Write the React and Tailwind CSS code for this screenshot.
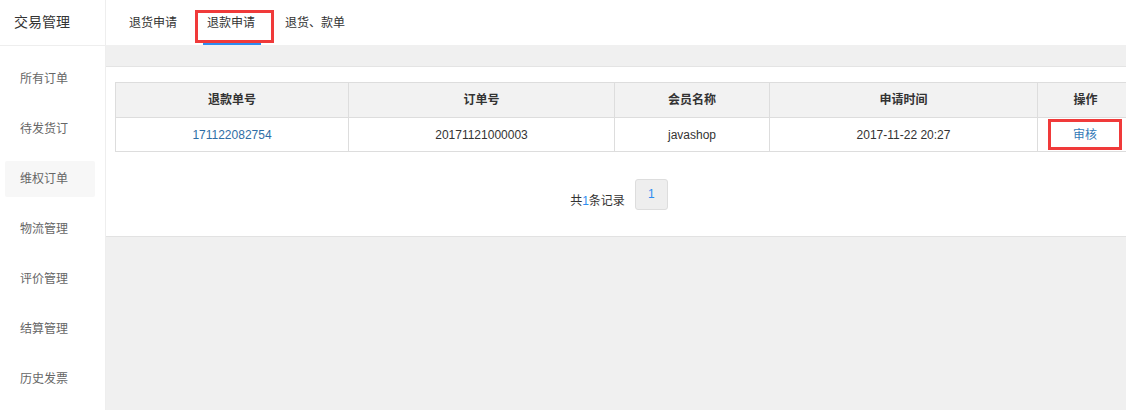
const menu = ["所有订单", "待发货订", "维权订单", "物流管理", "评价管理", "结算管理", "历史发票"];
const tabs = ["退货申请", "退款申请", "退货、款单"];

const cols = [
  { title: "退款单号", w: "w-[233px]" },
  { title: "订单号", w: "w-[266px]" },
  { title: "会员名称", w: "w-[155px]" },
  { title: "申请时间", w: "w-[268px]" },
  { title: "操作", w: "w-[96px]" },
];

const App = () => {
  return (
    <div className="flex h-[410px] w-[1126px] overflow-hidden bg-white font-['Liberation_Sans','Noto_Sans_CJK_SC',sans-serif]">
      {/* sidebar */}
      <aside className="w-[106px] shrink-0 border-r border-[#eeeeee] bg-white">
        <div className="flex h-[46px] items-center border-b border-[#eeeeee] pl-[14px] text-[14px] text-[#333]">
          交易管理
        </div>
        <ul className="pt-[15px]">
          {menu.map((m, i) => (
            <li
              key={m}
              className={`ml-[5px] mb-[14px] flex h-[36px] w-[90px] items-center rounded-[2px] pl-[15px] text-[12px] text-[#666] ${
                i === 2 ? "bg-[#f7f7f7]" : ""
              }`}
            >
              {m}
            </li>
          ))}
        </ul>
      </aside>

      {/* main */}
      <main className="flex min-w-0 flex-1 flex-col bg-[#f0f0f0]">
        <div className="flex h-[45px] shrink-0 items-stretch gap-[30px] bg-white pl-[23px]">
          {tabs.map((t, i) => (
            <div key={t} className="relative flex items-center text-[12px] text-[#333]">
              {t}
              {i === 1 && (
                <>
                  <span className="absolute bottom-0 left-[-4px] right-[-6px] h-[2px] bg-[#2d8cf0]" />
                  <span className="absolute left-[-12px] right-[-19px] top-[10px] h-[33px] border-[3px] border-[#f03a3a]" />
                </>
              )}
            </div>
          ))}
        </div>

        <div className="mt-[21px] border-t border-[#e4e4e4] bg-white pb-[26px] pt-[15px]">
          <table className="ml-[9px] w-[1018px] table-fixed border-collapse text-[12px] text-[#333]">
            <thead>
              <tr className="h-[35px] bg-[#f2f2f2]">
                {cols.map((c) => (
                  <th key={c.title} className={`${c.w} border border-[#dddddd] font-bold`}>
                    {c.title}
                  </th>
                ))}
              </tr>
            </thead>
            <tbody>
              <tr className="h-[34px] text-center">
                <td className="border border-[#dddddd] text-[#2f6ea6]">171122082754</td>
                <td className="border border-[#dddddd]">20171121000003</td>
                <td className="border border-[#dddddd]">javashop</td>
                <td className="border border-[#dddddd]">2017-11-22 20:27</td>
                <td className="border border-[#dddddd]">
                  <div className="flex justify-start pl-[10px]">
                    <span className="flex h-[31px] w-[74px] items-center justify-center border-[3px] border-[#f03a3a] text-[12px] text-[#337ab7]">
                      审核
                    </span>
                  </div>
                </td>
              </tr>
            </tbody>
          </table>

          <div className="mt-[26px] flex items-center justify-center pl-[6px]">
            <span className="mt-[14px] text-[12px] text-[#333]">
              共<span className="text-[#2d8cf0]">1</span>条记录
            </span>
            <span className="ml-[10px] flex h-[31px] w-[33px] items-center justify-center rounded-[3px] border border-[#dddddd] bg-[#eeeeee] text-[12px] text-[#2d8cf0]">
              1
            </span>
          </div>
        </div>

        <div className="flex-1 border-t border-[#e2e2e2] bg-[#f0f0f0]" />
      </main>
    </div>
  );
};

export default App;
